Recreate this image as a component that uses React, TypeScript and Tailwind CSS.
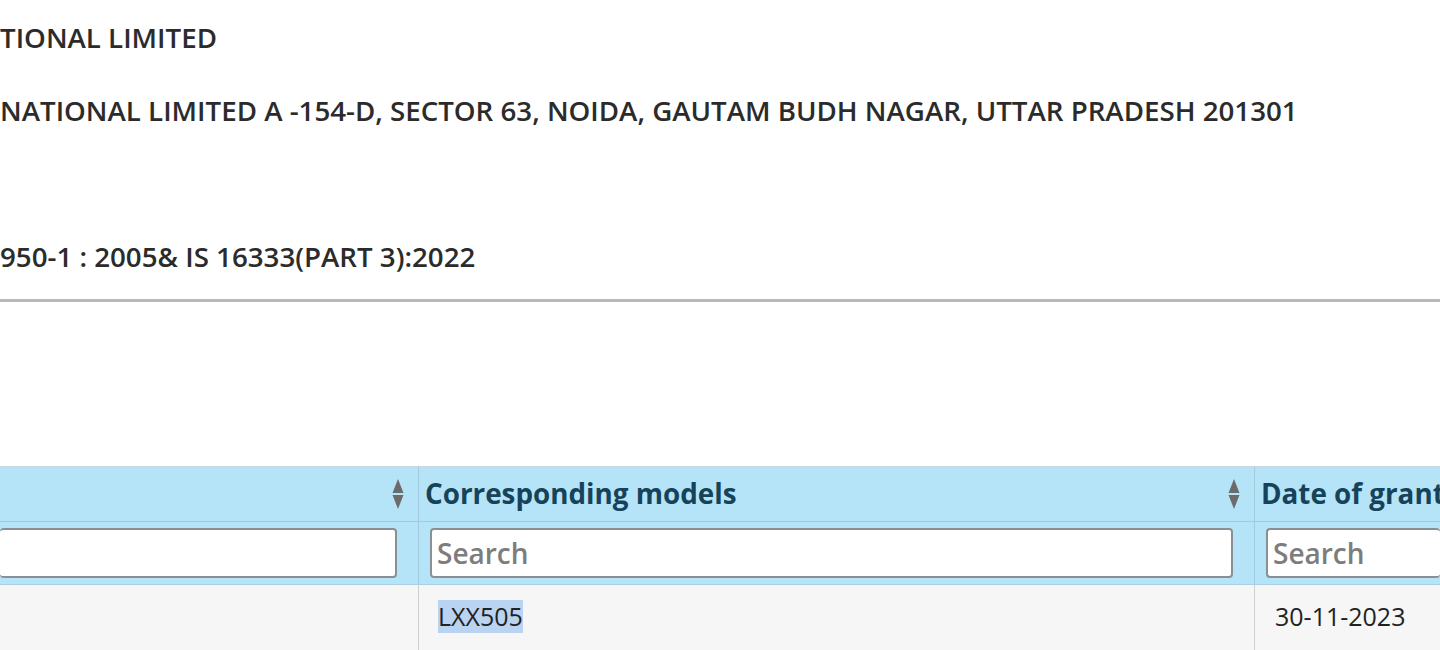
import { useState } from 'react';

const font = { fontFamily: '"Open Sans", "Liberation Sans", sans-serif' };

function SortIcon() {
  return (
    <svg width="12" height="30" viewBox="0 0 12 30" className="shrink-0">
      <path d="M6 0 L11.5 14 H0.5 Z" fill="#6b6b6b" />
      <path d="M6 30 L11.5 16 H0.5 Z" fill="#6b6b6b" />
    </svg>
  );
}

const lines = [
  'TIONAL LIMITED',
  'NATIONAL LIMITED A -154-D, SECTOR 63, NOIDA, GAUTAM BUDH NAGAR, UTTAR PRADESH 201301',
  '',
  '950-1 : 2005& IS 16333(PART 3):2022',
];

export default function App() {
  const [q, setQ] = useState(['', '', '']);
  const upd = (i: number, v: string) => setQ((p) => p.map((x, j) => (j === i ? v : x)));

  return (
    <div className="h-[650px] w-[1440px] overflow-hidden bg-white text-[#2b2b2b]" style={font}>
      <div className="pt-[1px]">
        {lines.map((l, i) => (
          <div key={i} className="flex h-[73px] items-center whitespace-nowrap text-[27.7px] font-semibold">{l}</div>
        ))}
      </div>
      <div className="mt-[6px] h-[3px] bg-[#b9b9b9]" />

      <div className="mt-[164px] border-t border-[#c9d8df]">
        <div className="grid grid-cols-[419px_836px_1fr] bg-[#b5e4f8]">
          <div className="flex h-[54px] items-center justify-end border-r border-[#a3cbdd] pr-[14px]"><SortIcon /></div>
          <div className="flex h-[54px] items-center justify-between border-r border-[#a3cbdd] pl-[6px] pr-[14px]">
            <span className="text-[27.8px] font-bold text-[#16435a]">Corresponding models</span>
            <SortIcon />
          </div>
          <div className="flex h-[54px] items-center overflow-hidden pl-[6px]">
            <span className="whitespace-nowrap text-[27.8px] font-bold text-[#16435a]">Date of grant</span>
          </div>
        </div>
        <div className="grid grid-cols-[419px_836px_1fr] border-t border-[#9fcbe0] bg-[#b5e4f8]">
          <div className="flex h-[62px] items-center border-r border-[#a3cbdd] pr-[21px]">
            <input value={q[0]} onChange={(e) => upd(0, e.target.value)} className="h-[50px] w-full rounded-[4px] border-2 border-l-0 border-[#8a8f93] bg-white outline-none" />
          </div>
          <div className="flex h-[62px] items-center border-r border-[#a3cbdd] pl-[11px] pr-[21px]">
            <input value={q[1]} onChange={(e) => upd(1, e.target.value)} placeholder="Search" className="h-[50px] w-full rounded-[4px] border-2 border-[#8a8f93] bg-white px-[5px] text-[28px] font-semibold text-[#333] outline-none placeholder:text-[#7d7d7d]" />
          </div>
          <div className="flex h-[62px] items-center pl-[11px]">
            <input value={q[2]} onChange={(e) => upd(2, e.target.value)} placeholder="Search" className="h-[50px] w-full rounded-[4px] border-2 border-r-0 border-[#8a8f93] bg-white px-[5px] text-[28px] font-semibold text-[#333] outline-none placeholder:text-[#7d7d7d]" />
          </div>
        </div>
        <div className="grid grid-cols-[419px_836px_1fr] border-t border-[#a9cfe0] bg-[#f6f6f6]">
          <div className="h-[70px] border-r border-[#cfcfcf]" />
          <div className="flex h-[70px] items-start border-r border-[#cfcfcf] pl-[19px] pt-[15px]">
            <span className="bg-[#b9d3f0] text-[25px] leading-[33px] text-[#222]">LXX505</span>
          </div>
          <div className="flex h-[70px] items-start pl-[20px] pt-[15px]">
            <span className="text-[25px] leading-[33px] text-[#222]">30-11-2023</span>
          </div>
        </div>
      </div>
    </div>
  );
}
